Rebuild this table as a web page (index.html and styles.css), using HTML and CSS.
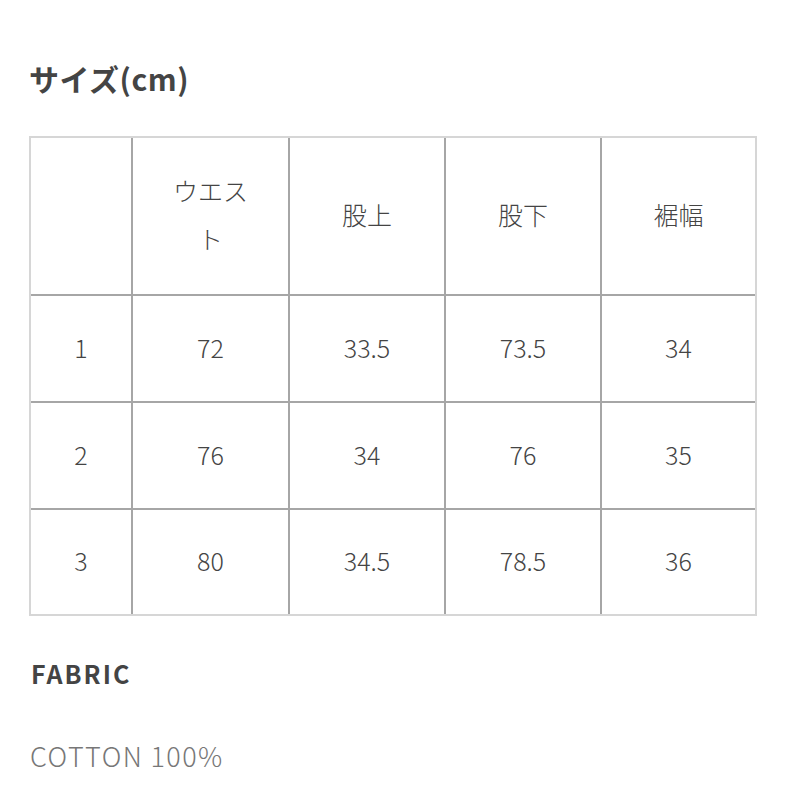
FILE: index.html
```html
<!DOCTYPE html>
<html lang="ja">
<head>
<meta charset="utf-8">
<link rel="stylesheet" href="styles.css">
</head>
<body>
<div class="page">
  <h2 class="title">サイズ(cm)</h2>
  <table class="size-table">
    <colgroup>
      <col class="c1"><col class="c2"><col class="c3"><col class="c4"><col class="c5">
    </colgroup>
    <tr class="head">
      <td></td><td>ウエスト</td><td>股上</td><td>股下</td><td>裾幅</td>
    </tr>
    <tr class="row">
      <td>1</td><td>72</td><td>33.5</td><td>73.5</td><td>34</td>
    </tr>
    <tr class="row">
      <td>2</td><td>76</td><td>34</td><td>76</td><td>35</td>
    </tr>
    <tr class="row last">
      <td>3</td><td>80</td><td>34.5</td><td>78.5</td><td>36</td>
    </tr>
  </table>
  <h3 class="fabric">FABRIC</h3>
  <p class="material">COTTON 100%</p>
</div>
</body>
</html>
```
FILE: styles.css
```css
html, body {
  margin: 0;
  padding: 0;
  background: #ffffff;
}
body {
  font-family: "Noto Sans CJK JP", "Noto Sans", sans-serif;
  color: #444444;
}
.page {
  padding: 54px 0 0 29px;
}
.title {
  margin: 0;
  font-size: 30px;
  font-weight: 700;
  line-height: 48px;
  letter-spacing: 0.5px;
  color: #444444;
}
.size-table {
  margin-top: 34px;
  width: 728px;
  table-layout: fixed;
  border-collapse: separate;
  border-spacing: 0;
  border: 2px solid #d6d6d6;
}
.c1 { width: 100px; }
.c2 { width: 157px; }
.c3 { width: 156px; }
.c4 { width: 156px; }
.c5 { width: 155px; }
.size-table td {
  box-sizing: border-box;
  padding: 0 30px 4px;
  text-align: center;
  vertical-align: middle;
  font-size: 25px;
  font-weight: 300;
  line-height: 48px;
  color: #444444;
  border-left: 2px solid #a6a6a6;
  border-top: 2px solid #a6a6a6;
}
.size-table td:first-child {
  border-left: none;
}
.head td {
  border-top: none;
  height: 156px;
  padding-bottom: 5px;
}
.row td {
  height: 107px;
}
.row.last td {
  height: 106px;
}
.fabric {
  margin: 33px 0 0 2px;
  font-size: 25px;
  font-weight: 700;
  line-height: 48px;
  letter-spacing: 2px;
  color: #444444;
}
.material {
  margin: 35px 0 0 1px;
  font-size: 27px;
  font-weight: 300;
  line-height: 48px;
  letter-spacing: 1.4px;
  color: #777777;
}
```
